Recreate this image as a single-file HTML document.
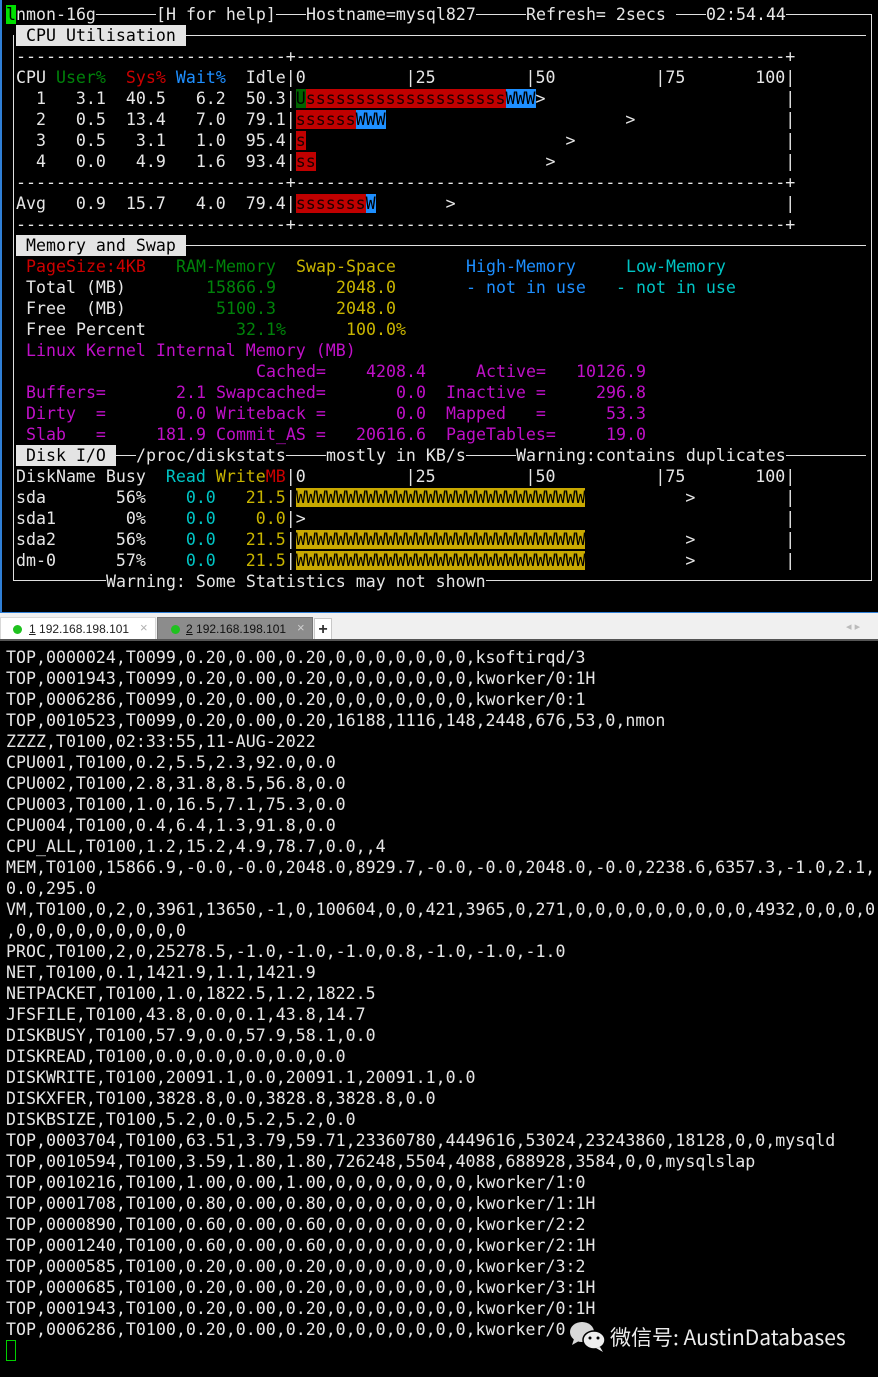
<!DOCTYPE html>
<html><head><meta charset="utf-8">
<style>
*{margin:0;padding:0;box-sizing:border-box}
body{width:878px;height:1377px;background:#000;position:relative;overflow:hidden;font-family:"DejaVu Sans Mono","Liberation Mono",monospace;font-size:16.6px;color:#e6e6e6}
.l{position:absolute;left:6px;height:21px;line-height:21px;white-space:pre}
.a{position:absolute;height:21px;line-height:21px;white-space:pre;background:#000}
.h{position:absolute;height:1px;background:#e0e0e0}
.v{position:absolute;width:1px;background:#e0e0e0}
.lab{background:#e4e4e4;color:#000}
.g{color:#00820a}.r{color:#cc0000}.b{color:#1e8fff}.y{color:#c8b400}.c{color:#00c4c4}.m{color:#c010c8}
.bg{background:#006400;color:#000}.br{background:#c00000;color:#1a0000}.bb{background:#1e8fff;color:#000}.by{background:#c8a800;color:#000;letter-spacing:0}
#bot{position:absolute;left:6px;top:647px;line-height:21px;white-space:pre;color:#e6e6e6}
</style></head><body>
<div style="position:absolute;left:0;top:0;width:2px;height:613px;background:#2f7fd6"></div>
<div style="position:absolute;left:0;top:612px;width:878px;height:1px;background:#2f7fd6"></div>

<div class="h" style="left:16px;top:14px;width:856px"></div>
<div class="v" style="left:871px;top:14px;height:567px"></div>
<div class="v" style="left:13px;top:35px;height:546px"></div>
<div class="h" style="left:13px;top:580px;width:859px"></div>
<div class="h" style="left:186px;top:35px;width:680px"></div>
<div class="h" style="left:186px;top:245px;width:680px"></div>
<div class="h" style="left:116px;top:455px;width:750px"></div>

<div class="a" style="left:6px;top:4px"><span style="background:#00e000;color:#000">l</span>nmon-16g</div>
<div class="a" style="left:156px;top:4px">[H for help]</div>
<div class="a" style="left:306px;top:4px">Hostname=mysql827</div>
<div class="a" style="left:526px;top:4px">Refresh= 2secs </div>
<div class="a" style="left:706px;top:4px">02:54.44</div>
<div class="a lab" style="left:16px;top:25px"> CPU Utilisation </div>
<div class="l" style="top:46px"> ---------------------------+-------------------------------------------------+</div>
<div class="l" style="top:67px"> CPU <span class="g">User%</span>  <span class="r">Sys%</span> <span class="b">Wait%</span>  Idle|0          |25         |50          |75       100|</div>
<div class="l" style="top:88px">   1   3.1  40.5   6.2  50.3|<span class="bg">U</span><span class="br">ssssssssssssssssssss</span><span class="bb">WWW</span>&gt;                        |</div>
<div class="l" style="top:109px">   2   0.5  13.4   7.0  79.1|<span class="br">ssssss</span><span class="bb">WWW</span>                        &gt;               |</div>
<div class="l" style="top:130px">   3   0.5   3.1   1.0  95.4|<span class="br">s</span>                          &gt;                     |</div>
<div class="l" style="top:151px">   4   0.0   4.9   1.6  93.4|<span class="br">ss</span>                       &gt;                       |</div>
<div class="l" style="top:172px"> ---------------------------+-------------------------------------------------+</div>
<div class="l" style="top:193px"> Avg   0.9  15.7   4.0  79.4|<span class="br">sssssss</span><span class="bb">W</span>       &gt;                                 |</div>
<div class="l" style="top:214px"> ---------------------------+-------------------------------------------------+</div>

<div class="a lab" style="left:16px;top:235px"> Memory and Swap </div>
<div class="a r" style="left:26px;top:256px">PageSize:4KB</div>
<div class="a g" style="left:176px;top:256px">RAM-Memory</div>
<div class="a y" style="left:296px;top:256px">Swap-Space</div>
<div class="a b" style="left:466px;top:256px">High-Memory</div>
<div class="a c" style="left:626px;top:256px">Low-Memory</div>
<div class="a" style="left:26px;top:277px">Total (MB)</div>
<div class="a g" style="left:206px;top:277px">15866.9</div>
<div class="a y" style="left:336px;top:277px">2048.0</div>
<div class="a b" style="left:466px;top:277px">- not in use</div>
<div class="a c" style="left:616px;top:277px">- not in use</div>
<div class="a" style="left:26px;top:298px">Free  (MB)</div>
<div class="a g" style="left:216px;top:298px">5100.3</div>
<div class="a y" style="left:336px;top:298px">2048.0</div>
<div class="a" style="left:26px;top:319px">Free Percent</div>
<div class="a g" style="left:236px;top:319px">32.1%</div>
<div class="a y" style="left:346px;top:319px">100.0%</div>
<div class="a m" style="left:26px;top:340px">Linux Kernel Internal Memory (MB)</div>
<div class="a m" style="left:256px;top:361px">Cached=</div>
<div class="a m" style="left:366px;top:361px">4208.4</div>
<div class="a m" style="left:476px;top:361px">Active=</div>
<div class="a m" style="left:576px;top:361px">10126.9</div>
<div class="a m" style="left:26px;top:382px">Buffers=</div>
<div class="a m" style="left:176px;top:382px">2.1</div>
<div class="a m" style="left:216px;top:382px">Swapcached=</div>
<div class="a m" style="left:396px;top:382px">0.0</div>
<div class="a m" style="left:446px;top:382px">Inactive =</div>
<div class="a m" style="left:596px;top:382px">296.8</div>
<div class="a m" style="left:26px;top:403px">Dirty  =</div>
<div class="a m" style="left:176px;top:403px">0.0</div>
<div class="a m" style="left:216px;top:403px">Writeback =</div>
<div class="a m" style="left:396px;top:403px">0.0</div>
<div class="a m" style="left:446px;top:403px">Mapped   =</div>
<div class="a m" style="left:606px;top:403px">53.3</div>
<div class="a m" style="left:26px;top:424px">Slab   =</div>
<div class="a m" style="left:156px;top:424px">181.9</div>
<div class="a m" style="left:216px;top:424px">Commit_AS =</div>
<div class="a m" style="left:356px;top:424px">20616.6</div>
<div class="a m" style="left:446px;top:424px">PageTables=</div>
<div class="a m" style="left:606px;top:424px">19.0</div>

<div class="a lab" style="left:16px;top:445px"> Disk I/O </div>
<div class="a" style="left:136px;top:445px">/proc/diskstats</div>
<div class="a" style="left:326px;top:445px">mostly in KB/s</div>
<div class="a" style="left:516px;top:445px">Warning:contains duplicates</div>
<div class="l" style="top:466px"> DiskName Busy  <span class="c">Read</span> <span class="y">Write</span><span class="r">MB</span>|0          |25         |50          |75       100|</div>
<div class="l" style="top:487px"> sda       56%    <span class="c">0.0</span>   <span class="y">21.5</span>|<span class="by">WWWWWWWWWWWWWWWWWWWWWWWWWWWWW</span>          &gt;         |</div>
<div class="l" style="top:508px"> sda1       0%    <span class="c">0.0</span>    <span class="y">0.0</span>|&gt;                                                |</div>
<div class="l" style="top:529px"> sda2      56%    <span class="c">0.0</span>   <span class="y">21.5</span>|<span class="by">WWWWWWWWWWWWWWWWWWWWWWWWWWWWW</span>          &gt;         |</div>
<div class="l" style="top:550px"> dm-0      57%    <span class="c">0.0</span>   <span class="y">21.5</span>|<span class="by">WWWWWWWWWWWWWWWWWWWWWWWWWWWWW</span>          &gt;         |</div>
<div class="a" style="left:106px;top:571px">Warning: Some Statistics may not shown</div>

<div style="position:absolute;left:0;top:613px;width:878px;height:28px;background:#f0f0f0;font-family:'Liberation Sans',sans-serif;font-size:12px">
  <div style="position:absolute;left:0;top:4px;width:156px;height:24px;background:#fff;border:1px solid #d8d8d8;border-bottom:none"></div>
  <div style="position:absolute;left:13px;top:12px;width:9px;height:9px;border-radius:50%;background:#1fc21f"></div>
  <div style="position:absolute;left:29px;top:9px;color:#222"><u>1</u> 192.168.198.101</div>
  <div style="position:absolute;left:140px;top:7px;color:#b0b0b0;font-size:13px">×</div>
  <div style="position:absolute;left:157px;top:4px;width:156px;height:24px;background:#8c8c8c;border:1px solid #777;border-bottom:none"></div>
  <div style="position:absolute;left:171px;top:12px;width:9px;height:9px;border-radius:50%;background:#1fc21f"></div>
  <div style="position:absolute;left:186px;top:9px;color:#111"><u>2</u> 192.168.198.101</div>
  <div style="position:absolute;left:297px;top:7px;color:#d0d0d0;font-size:13px">×</div>
  <div style="position:absolute;left:314px;top:5px;width:18px;height:23px;background:#fff;border:1px solid #c8c8c8;text-align:center;font-size:16px;line-height:21px;color:#333;font-weight:bold">+</div>
  <div style="position:absolute;left:846px;top:7px;color:#bbb;font-size:11px">◂ ▸</div>
  <div style="position:absolute;left:0;top:26px;width:878px;height:2px;background:#555"></div>
</div>

<div id="bot">TOP,0000024,T0099,0.20,0.00,0.20,0,0,0,0,0,0,0,ksoftirqd/3
TOP,0001943,T0099,0.20,0.00,0.20,0,0,0,0,0,0,0,kworker/0:1H
TOP,0006286,T0099,0.20,0.00,0.20,0,0,0,0,0,0,0,kworker/0:1
TOP,0010523,T0099,0.20,0.00,0.20,16188,1116,148,2448,676,53,0,nmon
ZZZZ,T0100,02:33:55,11-AUG-2022
CPU001,T0100,0.2,5.5,2.3,92.0,0.0
CPU002,T0100,2.8,31.8,8.5,56.8,0.0
CPU003,T0100,1.0,16.5,7.1,75.3,0.0
CPU004,T0100,0.4,6.4,1.3,91.8,0.0
CPU_ALL,T0100,1.2,15.2,4.9,78.7,0.0,,4
MEM,T0100,15866.9,-0.0,-0.0,2048.0,8929.7,-0.0,-0.0,2048.0,-0.0,2238.6,6357.3,-1.0,2.1,
0.0,295.0
VM,T0100,0,2,0,3961,13650,-1,0,100604,0,0,421,3965,0,271,0,0,0,0,0,0,0,0,0,4932,0,0,0,0
,0,0,0,0,0,0,0,0,0
PROC,T0100,2,0,25278.5,-1.0,-1.0,-1.0,0.8,-1.0,-1.0,-1.0
NET,T0100,0.1,1421.9,1.1,1421.9
NETPACKET,T0100,1.0,1822.5,1.2,1822.5
JFSFILE,T0100,43.8,0.0,0.1,43.8,14.7
DISKBUSY,T0100,57.9,0.0,57.9,58.1,0.0
DISKREAD,T0100,0.0,0.0,0.0,0.0,0.0
DISKWRITE,T0100,20091.1,0.0,20091.1,20091.1,0.0
DISKXFER,T0100,3828.8,0.0,3828.8,3828.8,0.0
DISKBSIZE,T0100,5.2,0.0,5.2,5.2,0.0
TOP,0003704,T0100,63.51,3.79,59.71,23360780,4449616,53024,23243860,18128,0,0,mysqld
TOP,0010594,T0100,3.59,1.80,1.80,726248,5504,4088,688928,3584,0,0,mysqlslap
TOP,0010216,T0100,1.00,0.00,1.00,0,0,0,0,0,0,0,kworker/1:0
TOP,0001708,T0100,0.80,0.00,0.80,0,0,0,0,0,0,0,kworker/1:1H
TOP,0000890,T0100,0.60,0.00,0.60,0,0,0,0,0,0,0,kworker/2:2
TOP,0001240,T0100,0.60,0.00,0.60,0,0,0,0,0,0,0,kworker/2:1H
TOP,0000585,T0100,0.20,0.00,0.20,0,0,0,0,0,0,0,kworker/3:2
TOP,0000685,T0100,0.20,0.00,0.20,0,0,0,0,0,0,0,kworker/3:1H
TOP,0001943,T0100,0.20,0.00,0.20,0,0,0,0,0,0,0,kworker/0:1H
TOP,0006286,T0100,0.20,0.00,0.20,0,0,0,0,0,0,0,kworker/0</div>
<div style="position:absolute;left:6px;top:1340px;width:10px;height:21px;border:1px solid #00d000"></div>

<svg style="position:absolute;left:568px;top:1320px" width="40" height="34" viewBox="0 0 40 34">
  <ellipse cx="14" cy="12" rx="12" ry="10" fill="#d8d8d8"/>
  <path d="M6 19 L4 25 L11 21 Z" fill="#d8d8d8"/>
  <ellipse cx="26" cy="20" rx="11" ry="9" fill="#eeeeee" stroke="#000" stroke-width="1.5"/>
  <path d="M32 27 L35 32 L28 28 Z" fill="#eeeeee"/>
  <circle cx="22" cy="18" r="1.5" fill="#000"/><circle cx="30" cy="18" r="1.5" fill="#000"/>
</svg>
<div style="position:absolute;left:610px;top:1323px;font-family:'Noto Sans CJK SC','Liberation Sans',sans-serif;font-size:21px;line-height:28px;color:#ececec;white-space:pre">微信号: AustinDatabases</div>
</body></html>
